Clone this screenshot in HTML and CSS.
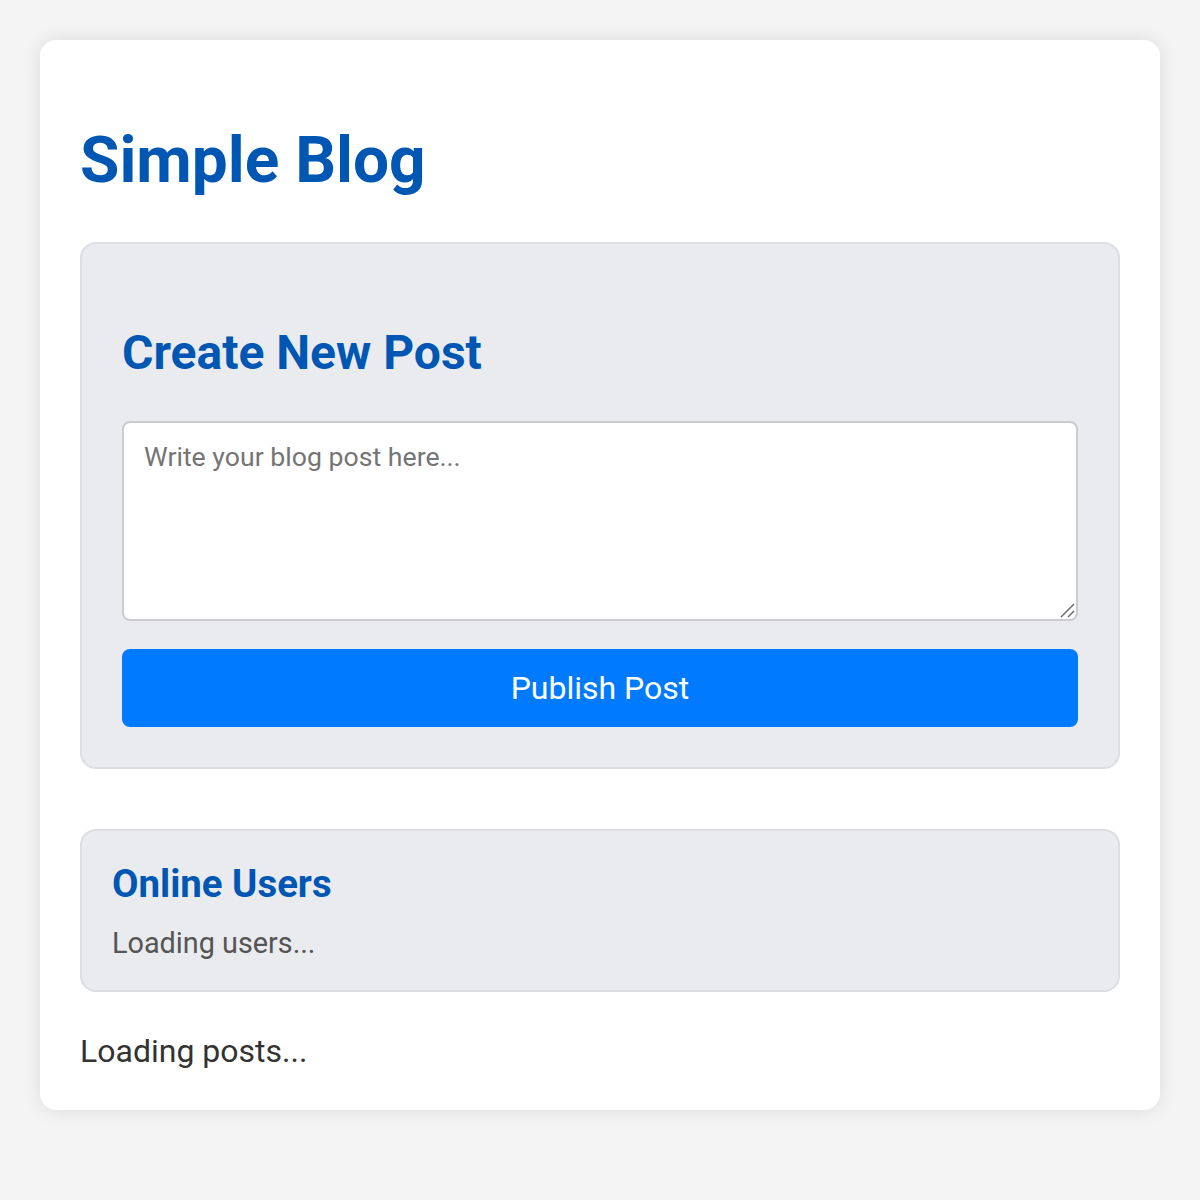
FILE: index.html
```html
<!DOCTYPE html>
<html lang="en">
<head>
<meta charset="utf-8">
<title>Simple Blog</title>
<link rel="stylesheet" href="styles.css">
</head>
<body>
<div class="container">
  <h1 class="title">Simple Blog</h1>
  <div class="post-form">
    <h2 class="form-title">Create New Post</h2>
    <div class="input-wrap">
      <textarea class="post-input" placeholder="Write your blog post here..."></textarea>
      <svg class="grip" width="16" height="16" viewBox="0 0 16 16" aria-hidden="true">
        <line x1="2" y1="15" x2="15" y2="2" stroke="#666" stroke-width="1.5"/>
        <line x1="9" y1="15" x2="15" y2="9" stroke="#666" stroke-width="1.5"/>
      </svg>
    </div>
    <button class="publish-btn">Publish Post</button>
  </div>
  <div class="users-box">
    <h3 class="users-title">Online Users</h3>
    <p class="users-status">Loading users...</p>
  </div>
  <div class="posts">Loading posts...</div>
</div>
</body>
</html>
```
FILE: styles.css
```css
html, body {
  margin: 0;
  padding: 0;
}
body {
  background: #f4f4f4;
  font-family: Roboto, "Liberation Sans", sans-serif;
  font-size: 32px;
  color: #333;
  padding: 40px;
}
.container {
  background: #fff;
  border-radius: 16px;
  padding: 40px;
  box-shadow: 0 0 20px rgba(0, 0, 0, 0.1);
}
.title {
  font-size: 64px;
  font-weight: 700;
  color: #0056b3;
  margin: 43px 0 44px;
}
.post-form {
  background: #e9ebee;
  border: 2px solid #dcdee1;
  border-radius: 16px;
  padding: 40px;
  margin-bottom: 60px;
}
.form-title {
  font-size: 48px;
  font-weight: 700;
  color: #0056b3;
  margin: 40px 0 40px;
}
.input-wrap {
  position: relative;
  margin: 0 0 28px;
}
.post-input {
  display: block;
  box-sizing: border-box;
  width: 100%;
  height: 200px;
  padding: 18px 20px;
  border: 2px solid #ccc;
  border-radius: 8px;
  font-family: Roboto, "Liberation Sans", sans-serif;
  font-size: 26.67px;
  color: #333;
  background: #fff;
  margin: 0;
  resize: none;
}
.post-input::placeholder {
  color: #757575;
}
.grip {
  position: absolute;
  right: 3px;
  bottom: 3px;
}
.publish-btn {
  display: block;
  width: 100%;
  box-sizing: border-box;
  background: #007bff;
  color: #fff;
  border: none;
  border-radius: 8px;
  padding: 20px;
  font-family: Roboto, "Liberation Sans", sans-serif;
  font-size: 32px;
  line-height: normal;
}
.users-box {
  background: #e9ebee;
  border: 2px solid #dcdee1;
  border-radius: 16px;
  padding: 30px;
  margin-bottom: 40px;
}
.users-title {
  font-size: 38.4px;
  font-weight: 700;
  color: #0056b3;
  margin: 0 0 20px;
}
.users-status {
  font-size: 28.8px;
  color: #555;
  margin: 0;
}
.posts {
  font-size: 32px;
  color: #333;
}
```
